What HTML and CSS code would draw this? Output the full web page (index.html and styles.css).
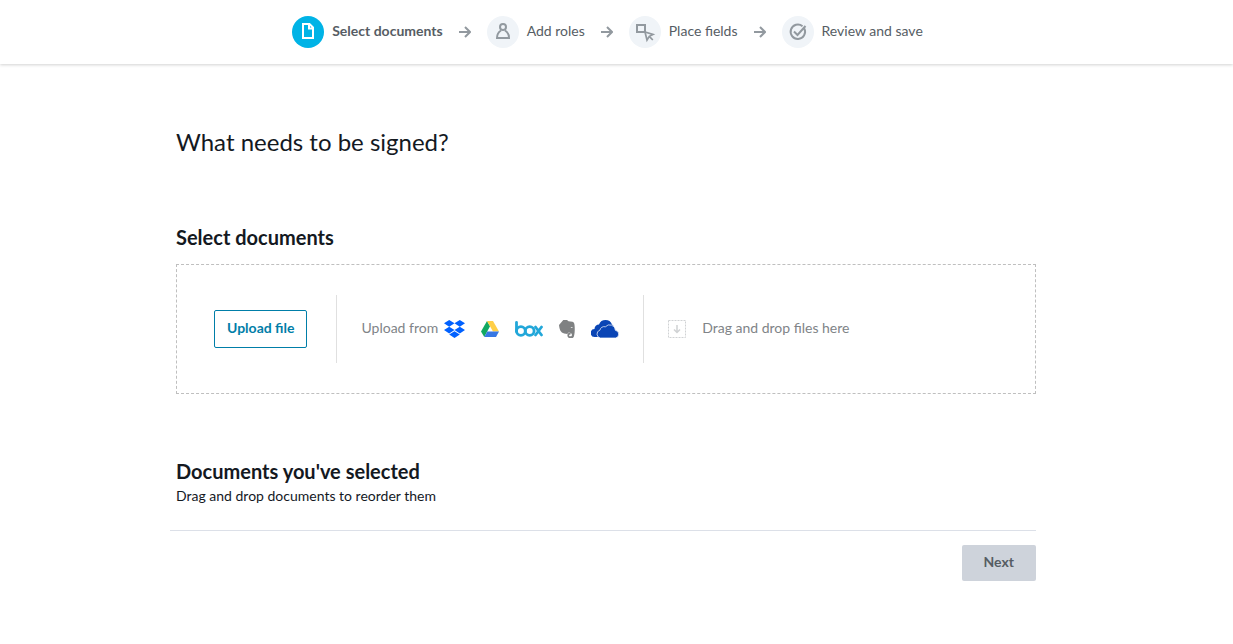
FILE: index.html
```html
<!DOCTYPE html>
<html lang="en">
<head>
<meta charset="utf-8">
<meta name="viewport" content="width=device-width, initial-scale=1">
<title>Select documents</title>
<link rel="stylesheet" href="styles.css">
</head>
<body>
<header class="topbar">
  <ol class="steps">
    <li class="step step-active" aria-current="step">
      <span class="step-icon"><svg width="32" height="32" viewBox="0 0 32 32"><path d="M11 8h6.500l3.500 3.500V22H11z M17 8v4.500h4"/></svg></span>
      <span class="step-label">Select documents</span>
    </li>
    <li class="arrow" aria-hidden="true"><svg width="12" height="12" viewBox="0 0 12 12"><path d="M0 6h11M6 1l5 5-5 5"/></svg></li>
    <li class="step">
      <span class="step-icon"><svg width="32" height="32" viewBox="0 0 32 32"><circle cx="16" cy="11" r="3"/><path d="M14 14.500c-2.500 1.500-4 4-4 7.500h12c0-3.500-1.500-6-4-7.500"/></svg></span>
      <span class="step-label">Add roles</span>
    </li>
    <li class="arrow" aria-hidden="true"><svg width="12" height="12" viewBox="0 0 12 12"><path d="M0 6h11M6 1l5 5-5 5"/></svg></li>
    <li class="step">
      <span class="step-icon"><svg width="32" height="32" viewBox="0 0 32 32"><path d="M8 9h8v7H8z"/><path stroke-width="1.700" d="M16 16l2 8 2.300-3.700L24 18.500z M20.300 20.300l3.500 3.700"/></svg></span>
      <span class="step-label">Place fields</span>
    </li>
    <li class="arrow" aria-hidden="true"><svg width="12" height="12" viewBox="0 0 12 12"><path d="M0 6h11M6 1l5 5-5 5"/></svg></li>
    <li class="step">
      <span class="step-icon"><svg width="32" height="32" viewBox="0 0 32 32"><path d="M20.500 10.200a7.200 7.200 0 1 0 1.900 2.500M12 15.500l3.500 3.500L23.500 10"/></svg></span>
      <span class="step-label">Review and save</span>
    </li>
  </ol>
</header>
<main class="page">
  <h1 class="title">What needs to be signed?</h1>
  <h2 class="heading">Select documents</h2>
  <section class="dropzone">
    <div class="upload"><button class="button button-outline" type="button">Upload file</button></div>
    <div class="sources">
      <span class="muted">Upload from</span>
      <button class="source" type="button" aria-label="Dropbox"><svg width="21" height="18" viewBox="0 0 21 18" fill="#0061ff"><path d="M5.200 0l5.300 3.300-5.300 3.400L0 3.300zM15.800 0L21 3.300l-5.200 3.400-5.300-3.400zM5.200 6.700l5.300 3.300-5.300 3.400L0 10zM15.800 6.700L21 10l-5.200 3.400-5.300-3.400zM10.500 11.200l5.300 3.400-5.300 3.400-5.300-3.400z"/></svg></button>
      <button class="source" type="button" aria-label="Google Drive"><svg width="18" height="16" viewBox="0 0 18 16"><path fill="#11a861" d="M6 0l3 5.300L3.300 16 0 10.600z"/><path fill="#ffcf48" d="M6 0h6l6 10.600h-6z"/><path fill="#3777e3" d="M6.200 10.600H18L15 16H3.300z"/></svg></button>
      <button class="source" type="button" aria-label="Box"><svg width="28" height="16" viewBox="0 0 28 16" fill="none" stroke="#22a7d9" stroke-width="2.800" stroke-linecap="round" stroke-linejoin="round"><path d="M1.500 1.500v9"/><circle cx="5.900" cy="10" r="4.400"/><circle cx="14.700" cy="10" r="4.400"/><path d="M20.500 6l6 8M26.500 6l-6 8"/></svg></button>
      <button class="source" type="button" aria-label="Evernote"><svg width="16" height="18" viewBox="0 0 16 18"><path fill="#7f8182" d="M4.300 0H8l1.500 1.200 4 .6c1.500.4 2.100 2 2.200 5.200.2 4-.1 8-1 9.900-.5.900-1.300 1.100-3 1.100-2.300 0-3.300-1-3.300-2.600 0-1.700 1-2.700 3.200-2.500v1.600c-1-.1-1.500.2-1.500.9 0 .8.700 1 1.500.9 1.200-.1 1.500-.8 1.200-2.100-.3-1.200-1.600-1.500-3.300-1.700-.4 1.300-1.200 1.600-2.700 1.300C2.500 13.200.7 11.500 0 5z"/><path fill="#fff" d="M11.600 7.800c.2-1.200 1.800-1.200 2.200.2-.8-.2-1.500-.2-2.200-.2z"/></svg></button>
      <button class="source" type="button" aria-label="OneDrive"><svg width="28" height="18" viewBox="0 0 28 18" fill="#0a45b5"><path d="M6 17H4a4 4 0 0 1-.5-8A4.500 4.500 0 0 1 8 4.500 7 7 0 0 1 21 4.500c1.200.7 2 2 2 3.500v9z"/><path stroke="#fff" stroke-width=".7" d="M9.500 18a4 4 0 0 1-.6-7.800 4.300 4.300 0 0 1 5.500-3.400 5.700 5.700 0 0 1 10 3.500A3.900 3.900 0 0 1 24.500 18z"/></svg></button>
    </div>
    <div class="drop">
      <svg width="18" height="18" viewBox="0 0 18 18" fill="none" stroke="#d0d2d4"><path stroke-dasharray="2 1" d="M.5.5h17v17H.5z"/><path stroke-width="1.500" d="M9 5v7M6 9.500l3 3 3-3"/></svg>
      <span class="muted">Drag and drop files here</span>
    </div>
  </section>
  <h2 class="heading">Documents you've selected</h2>
  <p class="hint">Drag and drop documents to reorder them</p>
  <footer class="actions"><button class="button button-next" type="button" disabled>Next</button></footer>
</main>
</body>
</html>
```
FILE: styles.css
```css
* { box-sizing: border-box; }
body {
  margin: 0;
  background: #fff;
  color: #14191f;
  font: 14px/20px Lato, "Liberation Sans", sans-serif;
}
svg { display: block; }
.topbar {
  padding: 16px;
  box-shadow: 0 1px 3px rgba(0, 0, 0, 0.18);
}
.steps {
  display: flex;
  align-items: center;
  justify-content: center;
  gap: 16px;
  margin: 0;
  padding: 0 18px 0 0;
  list-style: none;
  color: #565d64;
}
.step { display: flex; align-items: center; gap: 8px; white-space: nowrap; }
.step-label { padding-bottom: 2px; }
.step-icon { border-radius: 50%; background: #f0f4f8; }
.step-icon svg { fill: none; stroke: #92999f; stroke-width: 2; }
.step-active { font-weight: 700; }
.step-active .step-icon { background: #00b3e6; }
.step-active .step-icon svg { stroke: #fff; }
.arrow svg { fill: none; stroke: #92999f; stroke-width: 2; }
.page { max-width: 901px; margin: 0 auto; padding: 62px 31px 32px 10px; }
.title { margin: 0 0 64px; font-size: 24px; line-height: 32px; font-weight: 400; }
.heading { margin: 0; font-size: 20px; line-height: 30px; font-weight: 700; }
.dropzone {
  display: flex;
  align-items: center;
  min-height: 130px;
  margin: 12px 0 62px;
  padding: 0 37px;
  border: 1px dashed #bfbfbf;
}
.button {
  border-radius: 2px;
  font-family: inherit;
  font-size: 14px;
  font-weight: 700;
  line-height: 18px;
}
.button-outline { padding: 8px 12px 10px; border: 1px solid #007ea8; background: #fff; color: #007ea8; }
.upload { padding-right: 29px; }
.sources, .drop {
  display: flex;
  align-items: center;
  min-height: 68px;
  padding: 0 24px;
  border-left: 1px solid #e0e0e0;
}
.sources { gap: 16px; }
.sources .muted { margin-right: -10px; }
.source { padding: 0; border: 0; background: none; }
.drop { gap: 16px; }
.muted { padding-bottom: 2px; color: #808488; }
.hint { margin: 0 0 24px; }
.actions {
  display: flex;
  justify-content: flex-end;
  margin-left: -6px;
  padding-top: 14px;
  border-top: 1px solid #dce0e8;
}
.button-next { padding: 8px 22px 10px; border: 0; background: #ced3db; color: #565d64; }
```
